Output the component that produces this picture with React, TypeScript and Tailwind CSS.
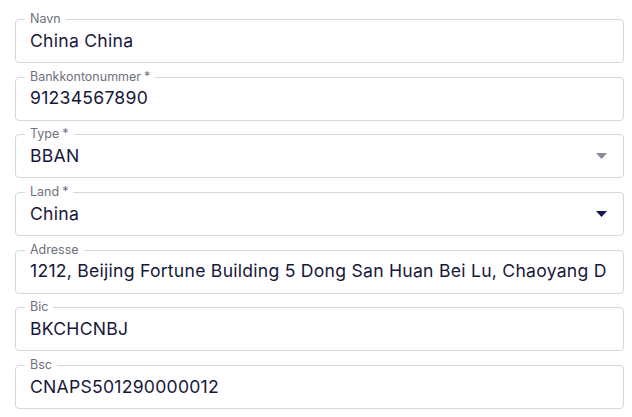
import React from 'react';

type Field = {
  label: string;
  value: string;
  required?: boolean;
  select?: 'muted' | 'active';
};

const fields: Field[] = [
  { label: 'Navn', value: 'China China' },
  { label: 'Bankkontonummer', value: '91234567890', required: true },
  { label: 'Type', value: 'BBAN', required: true, select: 'muted' },
  { label: 'Land', value: 'China', required: true, select: 'active' },
  { label: 'Adresse', value: '1212, Beijing Fortune Building 5 Dong San Huan Bei Lu, Chaoyang D' },
  { label: 'Bic', value: 'BKCHCNBJ' },
  { label: 'Bsc', value: 'CNAPS501290000012' },
];

const Caret: React.FC<{ active?: boolean }> = ({ active }) => (
  <svg width="11" height="6" viewBox="0 0 11 6" className={active ? 'text-[#14145a]' : 'text-[#8a8a98]'}>
    <path d="M0 0 L11 0 L5.5 6 Z" fill="currentColor" />
  </svg>
);

const App: React.FC = () => {
  return (
    <div
      className="w-[632px] h-[417px] bg-white pt-[19px] px-[15px] flex flex-col gap-[13.67px] overflow-hidden"
      style={{ fontFamily: 'Inter, "Noto Sans", sans-serif' }}
    >
      {fields.map((f) => (
        <div key={f.label} className="relative h-[44px] w-[609px] border border-[#d6d6dc] rounded-[4px]">
          {/* Floating label */}
          <span className="absolute left-[9px] top-[-9px] px-[5px] bg-white text-[12.5px] leading-[16px] text-[#6f6f7d]">
            {f.label}
            {f.required && <span className="ml-[3px]">*</span>}
          </span>
          <div className="h-full flex items-center pl-[14px] pr-[14px] gap-2">
            <div className="flex-1 min-w-0 whitespace-nowrap text-[17.6px] tracking-[0.25px] text-[#17173a]">
              {f.value}
            </div>
            {f.select && (
              <div className="pr-[2px]">
                <Caret active={f.select === 'active'} />
              </div>
            )}
          </div>
        </div>
      ))}
    </div>
  );
};

export default App;
